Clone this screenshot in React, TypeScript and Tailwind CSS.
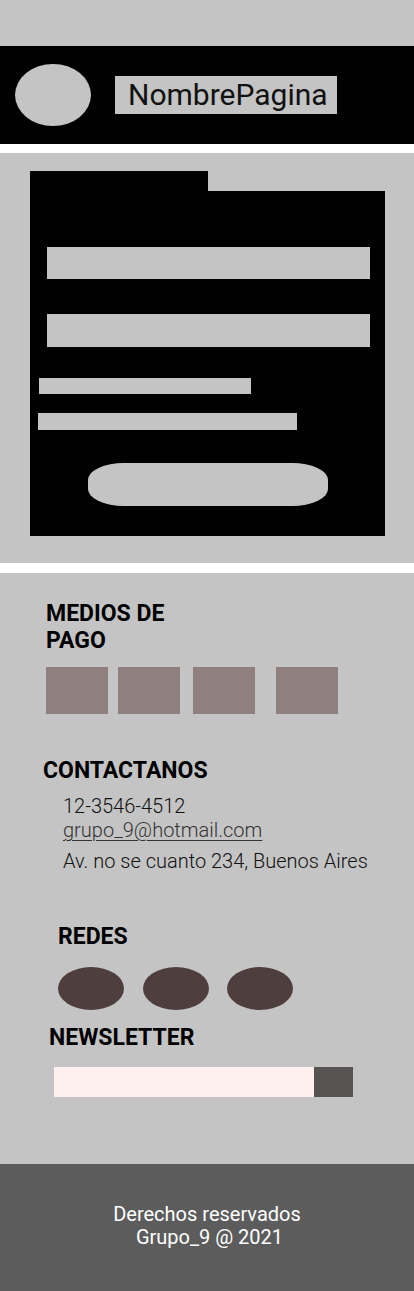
import React from "react";

export default function App() {
  const font = { fontFamily: "Roboto, 'Liberation Sans', sans-serif" };
  return (
    <div className="w-[414px] bg-white" style={font}>
      <div className="h-[46px] bg-[#c4c4c4]" />
      <header className="flex h-[98px] items-center bg-black">
        <div className="ml-[15px] h-[62px] w-[76px] rounded-[50%] bg-[#c4c4c4]" />
        <div className="ml-[24px] flex h-[38px] w-[222px] items-center bg-[#c4c4c4] pl-[13px] text-[30px] leading-none text-[#111]">
          NombrePagina
        </div>
      </header>
      <div className="h-[9px] bg-white" />
      <section className="h-[410px] bg-[#c4c4c4] pl-[30px] pt-[18px]">
        <div className="h-[20px] w-[178px] bg-black" />
        <div className="flex h-[345px] w-[355px] flex-col bg-black pt-[56px]">
          <div className="ml-[17px] h-[32px] w-[323px] bg-[#c4c4c4]" />
          <div className="ml-[17px] mt-[35px] h-[33px] w-[323px] bg-[#c4c4c4]" />
          <div className="ml-[9px] mt-[31px] h-[16px] w-[212px] bg-[#c4c4c4]" />
          <div className="ml-[8px] mt-[19px] h-[17px] w-[259px] bg-[#c4c4c4]" />
          <div className="ml-[58px] mt-[33px] h-[43px] w-[240px] rounded-[36px/17px] bg-[#c4c4c4]" />
        </div>
      </section>
      <div className="h-[10px] bg-white" />
      <section className="flex h-[591px] flex-col bg-[#c4c4c4] pt-[27px]">
        <h2 className="ml-[46px] text-[23px] font-bold leading-[27px] text-black">
          MEDIOS DE
          <br />
          PAGO
        </h2>
        <div className="ml-[46px] mt-[13px] flex h-[47px]">
          <div className="h-[47px] w-[62px] bg-[#8f7f7f]" />
          <div className="ml-[10px] h-[47px] w-[62px] bg-[#8f7f7f]" />
          <div className="ml-[13px] h-[47px] w-[62px] bg-[#8f7f7f]" />
          <div className="ml-[21px] h-[47px] w-[62px] bg-[#8f7f7f]" />
        </div>
        <h2 className="ml-[43px] mt-[43px] text-[23px] font-bold leading-[27px] text-black">
          CONTACTANOS
        </h2>
        <div className="ml-[63px] mt-[10px] text-[20px] font-light leading-[24px] text-[#111]">
          <p>12-3546-4512</p>
          <p className="text-[#333] underline decoration-[1px] underline-offset-[3px]">grupo_9@hotmail.com</p>
          <p className="mt-[7px]">Av. no se cuanto 234, Buenos Aires</p>
        </div>
        <h2 className="ml-[58px] mt-[50px] text-[23px] font-bold leading-[27px] text-black">
          REDES
        </h2>
        <div className="ml-[58px] mt-[17px] flex">
          <div className="h-[43px] w-[66px] rounded-[50%] bg-[#4f3e3e]" />
          <div className="ml-[19px] h-[43px] w-[66px] rounded-[50%] bg-[#4f3e3e]" />
          <div className="ml-[18px] h-[43px] w-[66px] rounded-[50%] bg-[#4f3e3e]" />
        </div>
        <h2 className="ml-[49px] mt-[14px] text-[23px] font-bold leading-[27px] text-black">
          NEWSLETTER
        </h2>
        <div className="ml-[54px] mt-[16px] flex h-[30px]">
          <div className="h-[30px] w-[260px] bg-[#fff0f0]" />
          <div className="h-[30px] w-[39px] bg-[#575353]" />
        </div>
      </section>
      <footer className="flex h-[127px] flex-col items-center bg-[#5c5c5c] pt-[39px] text-[20px] leading-[23px] text-white">
        <p>Derechos reservados</p>
        <p>&nbsp;Grupo_9 @ 2021</p>
      </footer>
    </div>
  );
}
